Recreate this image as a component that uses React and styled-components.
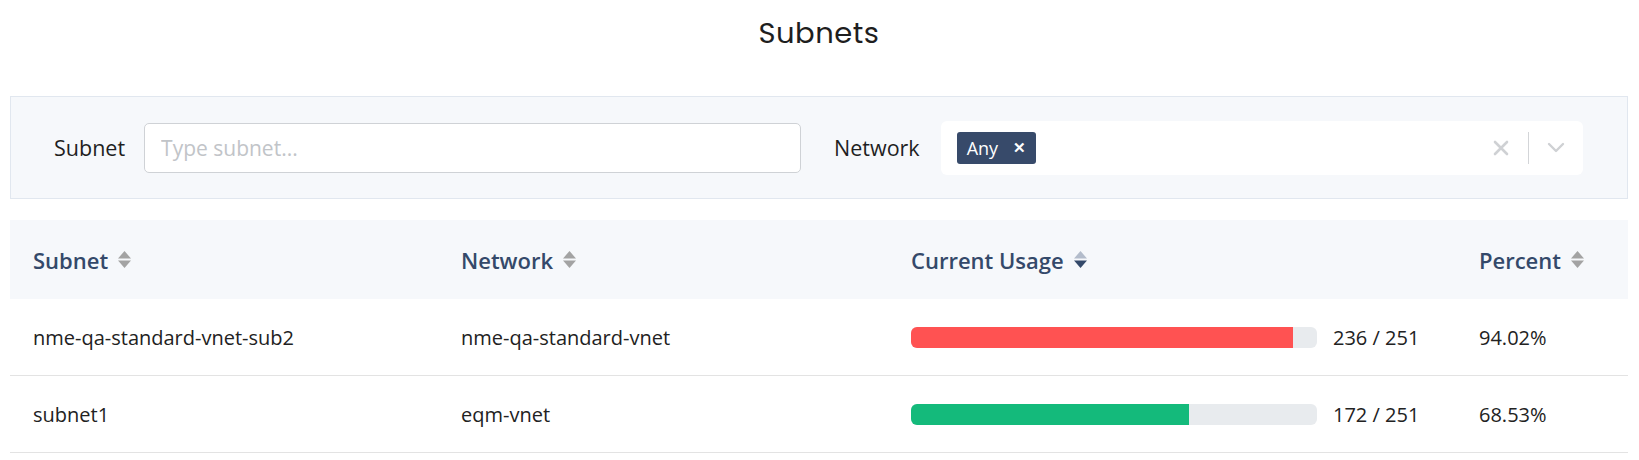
import React from "react";
import styled, { createGlobalStyle } from "styled-components";

const Global = createGlobalStyle`
  html, body { margin: 0; padding: 0; background: #fff; }
  body { font-family: "Open Sans", "Noto Sans", sans-serif; color: #222; }
  * { box-sizing: border-box; }
`;

const Page = styled.div`
  padding: 0 11px 0 10px;
`;

const Title = styled.h1`
  margin: 0 0 30px;
  height: 66px;
  line-height: 66px;
  text-align: center;
  font-family: "Poppins", "Lato", sans-serif;
  font-weight: 400;
  font-size: 29px;
  letter-spacing: 0.5px;
  color: #1e1e1e;
`;

const FilterPanel = styled.div`
  display: flex;
  align-items: center;
  height: 103px;
  padding: 0 44px 0 43px;
  background: #f6f8fb;
  border: 1px solid #e1e7ef;
`;

const FieldLabel = styled.label`
  font-size: 21.5px;
  font-weight: 500;
  color: #1f1f1f;
  margin-right: ${(p) => p.$gap}px;
`;

const TextInput = styled.input`
  width: 657px;
  height: 50px;
  border: 1px solid #cfd2d6;
  border-radius: 5px;
  background: #fff;
  padding: 0 16px;
  font-family: inherit;
  font-size: 21px;
  color: #333;
  margin-right: 33px;
  outline: none;
  &::placeholder { color: #c1c4c8; }
`;

const Select = styled.div`
  flex: 1;
  height: 54px;
  border-radius: 6px;
  background: #fff;
  display: flex;
  align-items: center;
  padding: 0 0 0 16px;
`;

const Tag = styled.span`
  display: inline-flex;
  align-items: center;
  height: 32px;
  padding: 0 10px 0 10px;
  gap: 15px;
  background: #374a6a;
  color: #fff;
  border-radius: 3px;
  font-size: 18px;
`;

const TagX = styled.span`
  font-size: 15px;
  font-weight: 700;
  line-height: 1;
`;

const SelectSpacer = styled.div`
  flex: 1;
`;

const Indicator = styled.div`
  width: 54px;
  display: flex;
  align-items: center;
  justify-content: center;
`;

const Divider = styled.span`
  width: 1px;
  height: 32px;
  background: #d3d5d8;
`;

const Table = styled.div`
  margin-top: 21px;
`;

const Row = styled.div`
  display: grid;
  grid-template-columns: 428px 450px 568px 1fr;
  align-items: center;
  height: ${(p) => (p.$head ? 79 : 77)}px;
  background: ${(p) => (p.$head ? "#f6f8fb" : "#fff")};
  border-bottom: ${(p) => (p.$head ? "none" : "1px solid #e3e3e3")};
`;

const HeadCell = styled.div`
  padding-left: 23px;
  display: flex;
  align-items: center;
  gap: 10px;
  font-size: 22px;
  font-weight: 600;
  color: #34496a;
`;

const Cell = styled.div`
  padding-left: 23px;
  font-size: 20px;
  color: #222;
  display: flex;
  align-items: center;
`;

const Bar = styled.div`
  width: 406px;
  height: 21px;
  border-radius: 6px;
  background: #e8ebee;
  overflow: hidden;
  margin-right: 16px;
`;

const Fill = styled.div`
  height: 100%;
  background: ${(p) => p.$color};
`;

const SortIcon = ({ active }) => (
  <svg width="13" height="17" viewBox="0 0 13 17">
    <path d="M6.5 0 L13 7.5 H0 Z" fill={active ? "#b3bccb" : "#a3a3a3"} />
    <path d="M0 9.5 H13 L6.5 17 Z" fill={active ? "#34496a" : "#a3a3a3"} />
  </svg>
);

const rows = [
  { subnet: "nme-qa-standard-vnet-sub2", network: "nme-qa-standard-vnet", used: 236, total: 251, color: "#ff5252" },
  { subnet: "subnet1", network: "eqm-vnet", used: 172, total: 251, color: "#14ba7b" },
];

export default function App() {
  return (
    <>
      <Global />
      <Page>
        <Title>Subnets</Title>
        <FilterPanel>
          <FieldLabel $gap={19}>Subnet</FieldLabel>
          <TextInput placeholder="Type subnet..." />
          <FieldLabel $gap={21}>Network</FieldLabel>
          <Select>
            <Tag>
              Any <TagX>✕</TagX>
            </Tag>
            <SelectSpacer />
            <Indicator>
              <svg width="16" height="16" viewBox="0 0 16 16">
                <path d="M2 2 L14 14 M14 2 L2 14" stroke="#cfd1d4" strokeWidth="2.6" strokeLinecap="round" />
              </svg>
            </Indicator>
            <Divider />
            <Indicator>
              <svg width="18" height="11" viewBox="0 0 18 11">
                <path d="M2 2 L9 9 L16 2" stroke="#cfd1d4" strokeWidth="2.4" fill="none" strokeLinecap="round" strokeLinejoin="round" />
              </svg>
            </Indicator>
          </Select>
        </FilterPanel>
        <Table>
          <Row $head>
            <HeadCell>Subnet <SortIcon /></HeadCell>
            <HeadCell>Network <SortIcon /></HeadCell>
            <HeadCell>Current Usage <SortIcon active /></HeadCell>
            <HeadCell>Percent <SortIcon /></HeadCell>
          </Row>
          {rows.map((r) => {
            const pct = (r.used / r.total) * 100;
            return (
              <Row key={r.subnet}>
                <Cell>{r.subnet}</Cell>
                <Cell>{r.network}</Cell>
                <Cell>
                  <Bar>
                    <Fill $color={r.color} style={{ width: `${pct}%` }} />
                  </Bar>
                  {r.used} / {r.total}
                </Cell>
                <Cell>{pct.toFixed(2)}%</Cell>
              </Row>
            );
          })}
        </Table>
      </Page>
    </>
  );
}
